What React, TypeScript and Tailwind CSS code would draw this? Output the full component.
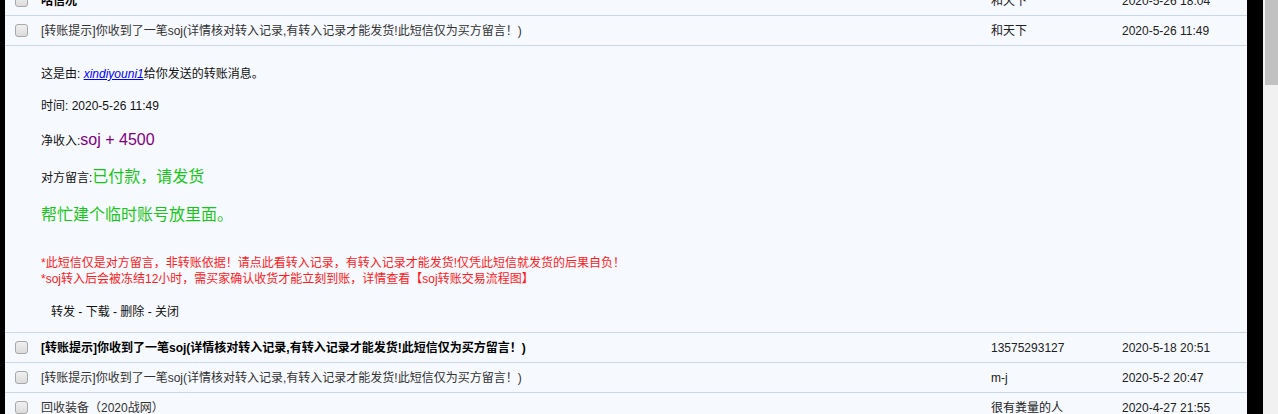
import React from "react";

const FONT = { fontFamily: '"Liberation Sans", Arial, "Noto Sans CJK SC", sans-serif' };

function Checkbox() {
  return (
    <div className="w-[13px] h-[13px] rounded-[3px] border border-[#a8a8a8] bg-gradient-to-b from-[#f0f0f0] to-[#dcdcdc] shrink-0" />
  );
}

function Row({
  subject,
  name,
  date,
  bold,
  className = "",
}: {
  subject: string;
  name: string;
  date: string;
  bold?: boolean;
  className?: string;
}) {
  return (
    <div
      className={`flex items-center h-[30px] border-b border-[#cbd8e5] text-[12px] leading-[16px] ${className}`}
    >
      <div className="pl-[10px] pr-[13px] flex items-center">
        <Checkbox />
      </div>
      <div className={`flex-1 whitespace-nowrap ${bold ? "font-bold text-black" : "text-[#333]"}`}>{subject}</div>
      <div className="w-[131px] whitespace-nowrap text-[#222]">{name}</div>
      <div className="w-[125px] whitespace-nowrap text-[#222]">{date}</div>
    </div>
  );
}

export default function App() {
  const title = "[转账提示]你收到了一笔soj(详情核对转入记录,有转入记录才能发货!此短信仅为买方留言！)";
  return (
    <div className="flex h-[414px] w-[1278px] overflow-hidden bg-black" style={FONT}>
      <div className="w-[5px] shrink-0 bg-black" />
      <div className="w-[1242px] shrink-0 bg-[#f6f9fe] overflow-hidden">
        <div className="-mt-[14px]">
          <Row subject="咕信况" name="和天下" date="2020-5-26 18:04" bold />
          <Row subject={title} name="和天下" date="2020-5-26 11:49" />
          <div className="border-b border-[#cbd8e5] pl-[36px] pt-[18px] pb-[10px] text-[12px] text-[#111]">
            <div className="leading-[20px]">
              这是由:{" "}
              <a className="italic underline text-[#0000ff]" href="#">
                xindiyouni1
              </a>
              给你发送的转账消息。
            </div>
            <div className="leading-[20px] mt-[12px]">时间: 2020-5-26 11:49</div>
            <div className="leading-[24px] mt-[12px]">
              净收入:<span className="text-[16px] text-[#800080]">soj + 4500</span>
            </div>
            <div className="leading-[24px] mt-[12px]">
              对方留言:<span className="text-[16px] text-[#19c719]">已付款，请发货</span>
            </div>
            <div className="leading-[24px] mt-[13px] text-[16px] text-[#19c719]">帮忙建个临时账号放里面。</div>
            <div className="mt-[28px] text-[#ff1a1a] leading-[16px]">
              <div>*此短信仅是对方留言，非转账依据！请点此看转入记录，有转入记录才能发货!仅凭此短信就发货的后果自负！</div>
              <div>*soj转入后会被冻结12小时，需买家确认收货才能立刻到账，详情查看【soj转账交易流程图】</div>
            </div>
            <div className="leading-[20px] mt-[15px] pl-[10px] text-[#111]">转发 - 下载 - 删除 - 关闭</div>
          </div>
          <Row subject={title} name="13575293127" date="2020-5-18 20:51" bold />
          <Row subject={title} name="m-j" date="2020-5-2 20:47" />
          <Row subject="回收装备（2020战网）" name="很有粪量的人" date="2020-4-27 21:55" />
        </div>
      </div>
      <div className="w-[16px] shrink-0 bg-black" />
      <div className="w-[15px] shrink-0 bg-[#f1f1f1] pl-[2px]">
        <div className="h-[85px] bg-[#c1c1c1]" />
      </div>
    </div>
  );
}
